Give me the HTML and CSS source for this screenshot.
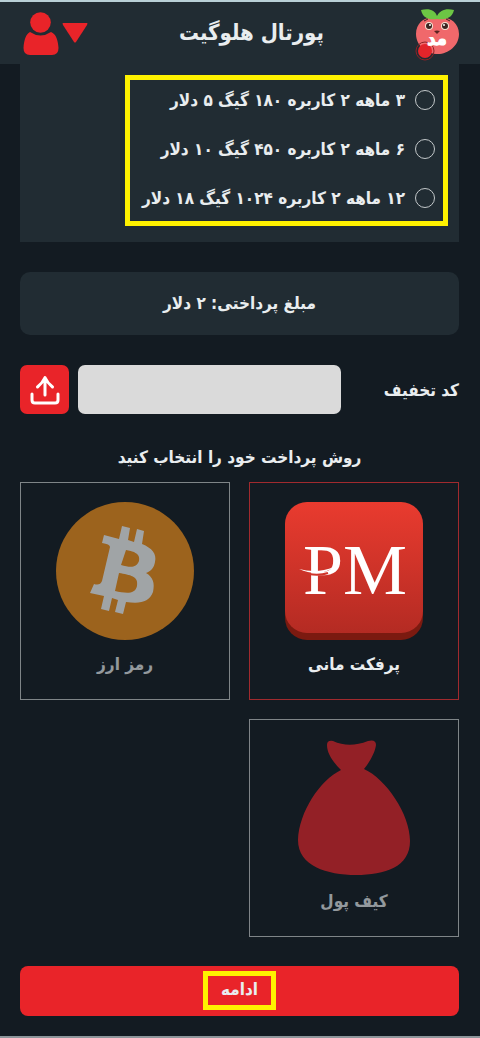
FILE: index.html
```html
<!DOCTYPE html>
<html lang="fa" dir="rtl">
<head>
<meta charset="utf-8">
<meta name="viewport" content="width=device-width, initial-scale=1">
<title>پورتال هلوگیت</title>
<link rel="stylesheet" href="styles.css">
</head>
<body>
<header class="topbar">
  <a class="brand" href="#" aria-label="هلوگیت">
    <svg width="45" height="52" viewBox="0 0 45 52">
      <path d="M22 10C30 6 44 11 44 25C44 37 33 45 23 45C12 45 1 37 1 25C1 11 14 6 22 10Z" fill="#f0686b"/>
      <path d="M22 10C15 11 8 10 6 1C14 -1 20 1 22 7C25 1 31 -1 39 1C37 10 29 11 22 10Z" fill="#6cc644"/>
      <circle cx="14" cy="17" r="4" fill="#f6e3d2"/><circle cx="30" cy="17" r="4" fill="#f6e3d2"/>
      <circle cx="14" cy="17" r="3" fill="#3b2622"/><circle cx="30" cy="17" r="3" fill="#3b2622"/>
      <circle cx="15" cy="16" r="1" fill="#fff"/><circle cx="29" cy="16" r="1" fill="#fff"/>
      <path d="M9 12L13 10M31 10L35 12" stroke="#3b2622" stroke-width="1"/>
      <path d="M19 22Q22 21 25 22L22 25Z" fill="#5a2320"/>
      <circle cx="10" cy="42" r="9" fill="none" stroke="#8f2226" stroke-width="1"/>
      <circle cx="10" cy="42" r="7" fill="#e3242a"/>
      <text class="brand-text" x="22" y="36" text-anchor="middle">مد</text>
    </svg>
  </a>
  <h1 class="title">پورتال هلوگیت</h1>
  <button class="account" type="button" aria-label="حساب کاربری">
    <svg width="26" height="20" viewBox="0 0 26 20"><path d="M1 0H25Q26 0 25 2L14 19Q13 20 12 19L1 2Q0 0 1 0Z" fill="#e92429"/></svg>
    <svg width="36" height="43" viewBox="0 0 36 43"><circle cx="17.500" cy="10.500" r="10.300" fill="#e92429"/><path d="M7 20Q17.500 27 28 20C33 22 35 28 35.500 36Q35.500 43 29 43H7Q.5 43 .5 36C1 28 3 22 7 20Z" fill="#e92429"/></svg>
  </button>
</header>
<main class="page">
  <section class="plans">
    <fieldset class="plan-list">
      <label class="plan"><input type="radio" name="plan"><span>۳ ماهه ۲ کاربره ۱۸۰ گیگ ۵ دلار</span></label>
      <label class="plan"><input type="radio" name="plan"><span>۶ ماهه ۲ کاربره ۴۵۰ گیگ ۱۰ دلار</span></label>
      <label class="plan"><input type="radio" name="plan"><span>۱۲ ماهه ۲ کاربره ۱۰۲۴ گیگ ۱۸ دلار</span></label>
    </fieldset>
  </section>
  <p class="total">مبلغ پرداختی: ۲ دلار</p>
  <form class="coupon">
    <label class="coupon-label" for="code">کد تخفیف</label>
    <input class="coupon-input" id="code" type="text">
    <button class="coupon-send" type="button" aria-label="ثبت کد">
      <svg width="30" height="30" viewBox="0 0 30 30" fill="none" stroke="#fff" stroke-width="3" stroke-linecap="round" stroke-linejoin="round"><path d="M15 20V3M7.500 12C10 10 13 7 15 2.500C17 7 20 10 22.500 12M2 19V25Q2 28 5 28H25Q28 28 28 25V19"/></svg>
    </button>
  </form>
  <h2 class="heading">روش پرداخت خود را انتخاب کنید</h2>
  <div class="methods">
    <button class="method selected" type="button">
      <svg class="logo" viewBox="0 0 138 138">
        <defs><linearGradient id="pm" x1="0" y1="0" x2="0" y2="1"><stop offset="0" stop-color="#e93b2f"/><stop offset="1" stop-color="#b42b23"/></linearGradient></defs>
        <rect y="8" width="138" height="130" rx="22" fill="#7b1a10"/>
        <rect width="138" height="131" rx="22" fill="url(#pm)"/>
        <text class="pm-text" x="18" y="92">PM</text>
        <path d="M14 67Q32 72 49 65Q34 76 14 67Z" fill="#fff"/>
        <path d="M24 72Q34 74 43 71" fill="none" stroke="#d03429" stroke-width="2"/>
      </svg>
      <span>پرفکت مانی</span>
    </button>
    <button class="method" type="button">
      <svg class="logo" viewBox="0 0 138 138">
        <circle cx="69" cy="69" r="69" fill="#f7931a"/>
        <path fill="#fff" fill-rule="evenodd" d="M48 33L63 37L66 24L74 26L72 38L78 40L81 27L88 29L86 42C96 46 101 52 99 60C98 66 95 69 90 71C97 75 99 81 97 90C93 100 85 102 70 100L67 112L59 110L62 98L56 96L53 109L45 107L48 94L34 91L38 82Q44 84 46 79L54 45Q54 42 46 41ZM70 48L65 63C73 65 80 67 83 59C85 51 76 49 70 48ZM63 71L59 89C69 91 79 93 81 84C83 74 74 73 63 71Z"/>
      </svg>
      <span>رمز ارز</span>
    </button>
    <button class="method" type="button">
      <svg class="logo" viewBox="-13 0 138 138">
        <path fill="#e92429" d="M43 31C36 24 29 15 29 6Q29 1 35 2C46 7 57 7 70 2Q78 0 78 6C77 14 71 24 66 30C88 40 112 75 112 102C112 128 87 136 58 136C29 136 0 127 0 101C1 73 22 41 43 31Z"/>
      </svg>
      <span>کیف پول</span>
    </button>
  </div>
  <button class="continue" type="submit"><span class="continue-mark">ادامه</span></button>
</main>
</body>
</html>
```
FILE: styles.css
```css
* { box-sizing: border-box; }
body {
  margin: 0;
  background: #131b22;
  color: #e9edef;
  font-family: "DejaVu Sans Condensed", "DejaVu Sans", sans-serif;
  font-size: 17px;
  font-weight: 700;
  line-height: 24px;
  border-top: 2px solid #b9d0d6;
  border-bottom: 2px solid #8d969b;
}
button, input { font: inherit; color: inherit; }
button { cursor: pointer; }
svg { display: block; }
.topbar {
  display: flex;
  align-items: center;
  justify-content: space-between;
  height: 62px;
  padding: 0 20px 0 23px;
  background: #212c33;
}
.brand { padding-top: 4px; }
.brand-text { font-size: 18px; fill: #fff; stroke: #fff; stroke-width: 1px; }
.title { margin: 0; font-size: 22px; line-height: 32px; }
.account {
  display: flex;
  align-items: center;
  gap: 3px;
  padding: 0;
  border: 0;
  background: none;
}
.page { padding: 0 21px 20px 20px; }
.plans { padding: 11px 11px 16px 0; background: #212c33; }
.plan-list {
  display: grid;
  gap: 25px;
  width: 323px;
  max-width: 100%;
  margin: 0;
  padding: 8px 8px 11px;
  border: 5px solid #fff200;
}
.plan { display: flex; align-items: center; gap: 10px; white-space: nowrap; }
.plan input {
  appearance: none;
  flex: none;
  width: 20px;
  height: 20px;
  margin: 0;
  border: 1px solid #c3c8ca;
  border-radius: 50%;
}
.plan input:checked { background: #e92429; }
.total {
  margin: 30px 0;
  padding: 19px 19px 20px;
  border-radius: 10px;
  background: #212c33;
  text-align: center;
}
.coupon { display: flex; align-items: center; gap: 9px; }
.coupon-label { flex: 1; }
.coupon-input {
  width: 60%;
  height: 49px;
  border: 0;
  border-radius: 7px;
  background: #dadada;
  color: #131b22;
}
.coupon-send {
  display: grid;
  place-items: center;
  width: 49px;
  height: 49px;
  padding: 0;
  border: 0;
  border-radius: 7px;
  background: #e92429;
}
.heading { margin: 31px 0 13px; font-size: 17px; text-align: center; }
.methods { display: grid; grid-template-columns: 1fr 1fr; gap: 19px; }
.method {
  display: flex;
  flex-direction: column;
  align-items: center;
  gap: 12px;
  padding: 19px 8px 23px;
  border: 1px solid #c8cccd;
  background: none;
  opacity: .6;
}
.method.selected { border-color: #a12a2e; opacity: 1; }
.logo { width: 138px; max-width: 100%; }
.pm-text { font: 72px "Liberation Serif", serif; fill: #fff; direction: ltr; }
.continue {
  display: flex;
  justify-content: center;
  width: 100%;
  margin-top: 29px;
  padding: 5px 5px 6px;
  border: 0;
  border-radius: 8px;
  background: #e92429;
}
.continue-mark {
  padding: 1px 13px 4px;
  border: 5px solid #fff200;
}
```
